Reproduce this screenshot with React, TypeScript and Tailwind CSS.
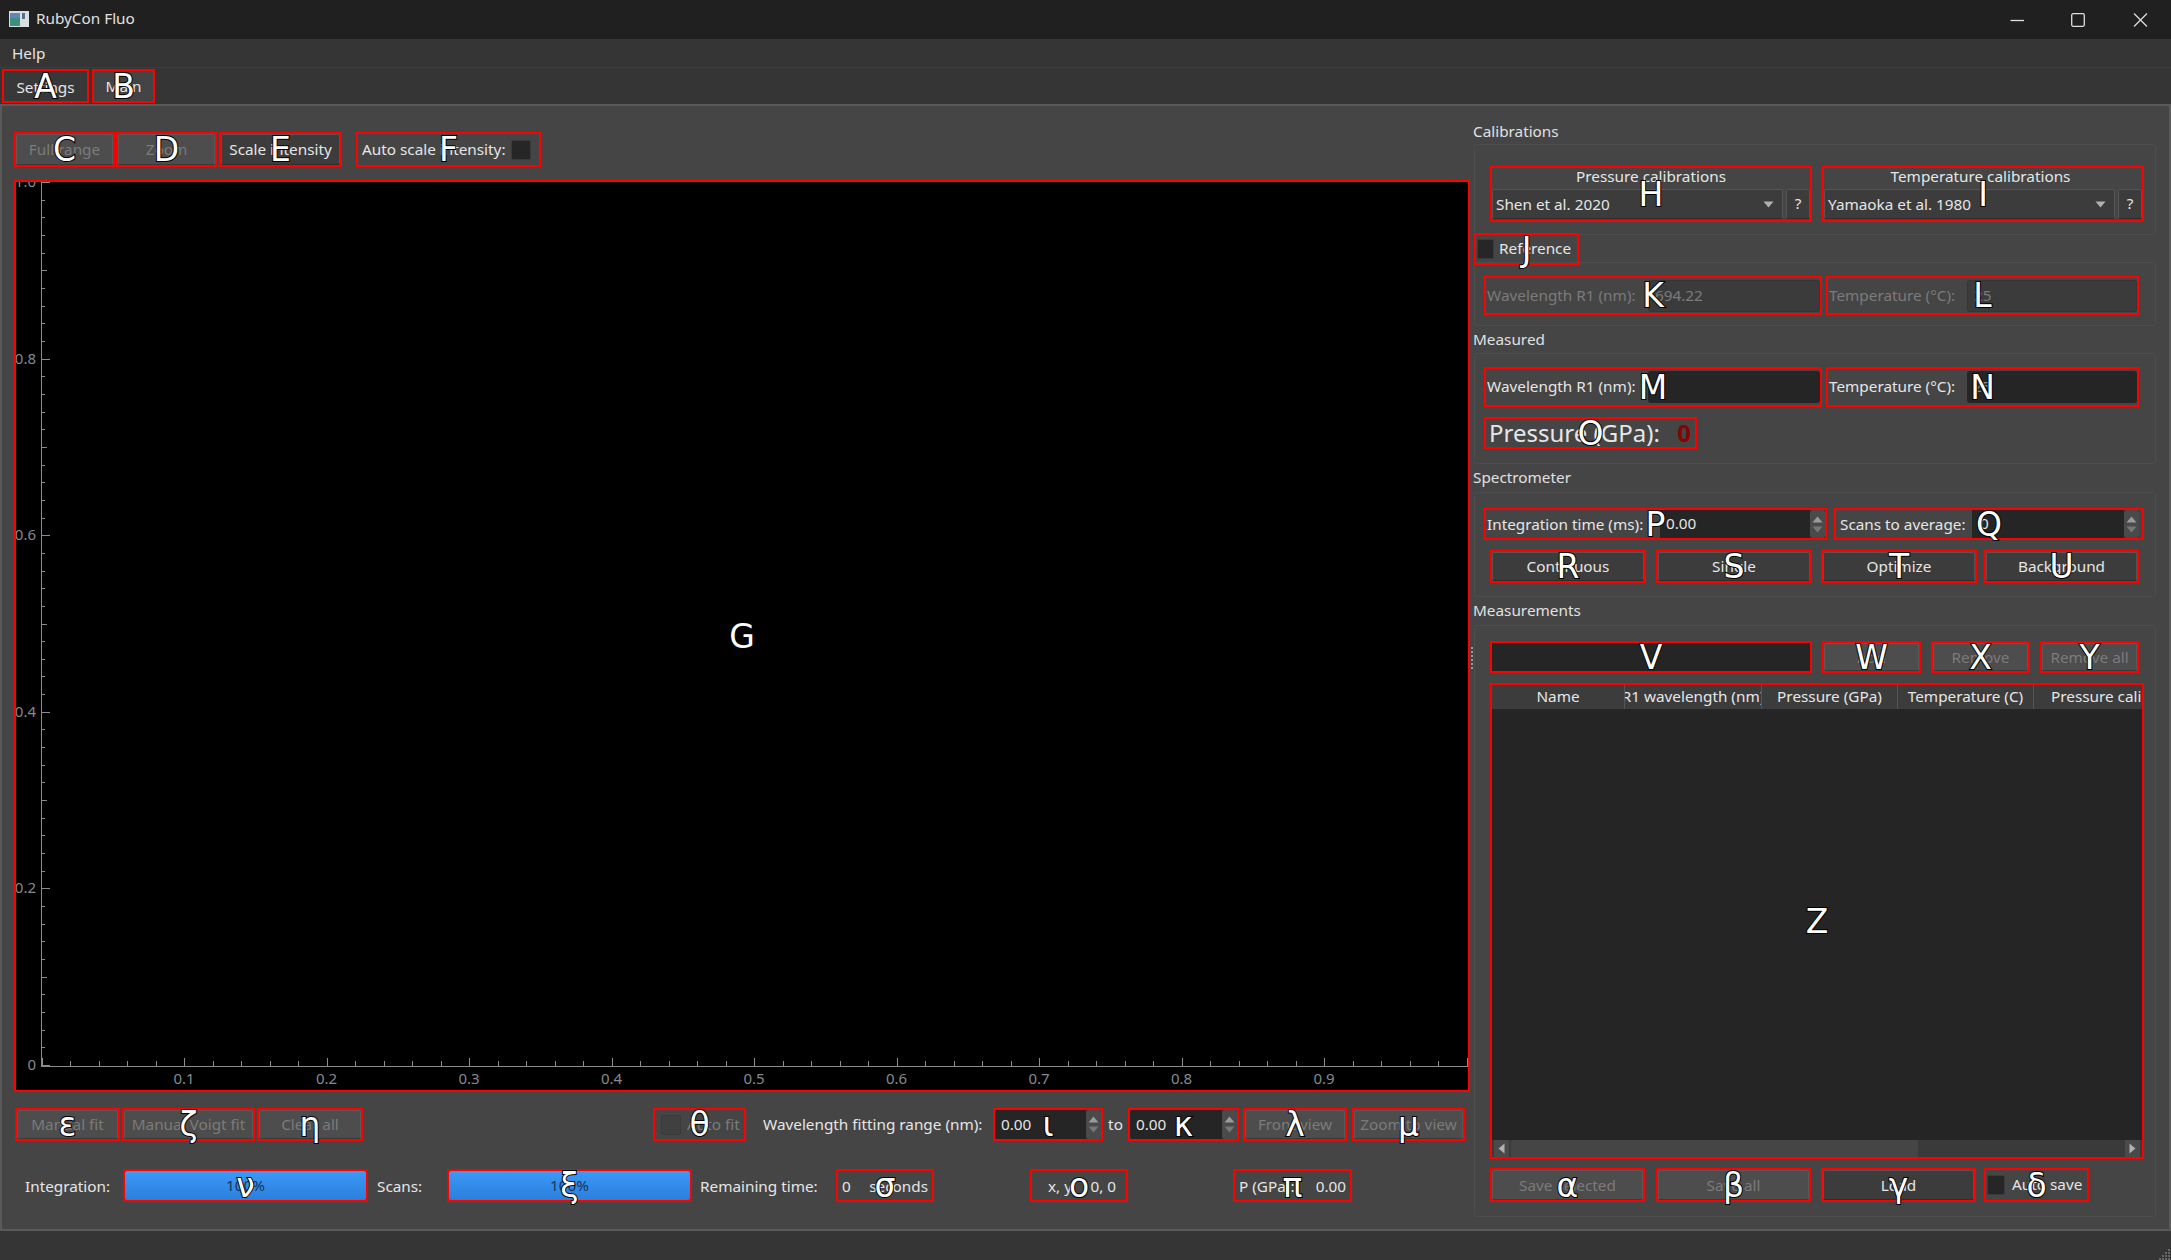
import type { ReactNode } from 'react';

const yTicks = Array.from({ length: 51 }, (_, i) => i);
const xTicks = Array.from({ length: 51 }, (_, i) => i);

function Mark({
  label,
  className,
  children,
}: {
  label: string;
  className: string;
  children?: ReactNode;
}) {
  return (
    <div className={`relative box-border shrink-0 border-2 border-[#ff0000] ${className}`}>
      {children}
      <span className="pointer-events-none absolute inset-0 z-10 flex items-center justify-center font-['DejaVu_Sans',sans-serif] text-[33px] leading-none text-white [-webkit-text-stroke:2px_#000] [paint-order:stroke_fill]">
        {label}
      </span>
    </div>
  );
}

function Btn({ text, disabled }: { text: string; disabled?: boolean }) {
  return (
    <div
      className={
        disabled
          ? 'flex h-full w-full items-center justify-center rounded-[2px] border border-[#5a5a5a] border-b-[#3a3a3a] bg-[#4d4d4d] pt-[1px] text-[#7b7b7b] whitespace-nowrap'
          : 'flex h-full w-full items-center justify-center rounded-[2px] border border-[#555555] border-b-[#2e2e2e] bg-[#3c3c3c] pt-[1px] text-[#e6e6e6] whitespace-nowrap'
      }
    >
      {text}
    </div>
  );
}

function Check({ className }: { className: string }) {
  return <div className={`shrink-0 rounded-[2px] border border-[#3a3a3a] bg-[#262626] ${className}`} />;
}

function Spin() {
  return (
    <div className="flex h-full w-[15px] shrink-0 flex-col items-center justify-center gap-[3px] rounded-[2px] bg-[#4a4a4a]">
      <svg width="11" height="7" viewBox="0 0 11 7">
        <path d="M5.5 0.5 L10.5 6.5 H0.5 Z" fill="#9a9a9a" />
      </svg>
      <svg width="11" height="7" viewBox="0 0 11 7">
        <path d="M0.5 0.5 H10.5 L5.5 6.5 Z" fill="#777777" />
      </svg>
    </div>
  );
}

function Combo({ text }: { text: string }) {
  return (
    <div className="flex h-[30px] w-[291px] shrink-0 items-center justify-between rounded-[2px] border border-[#555555] border-b-[#2e2e2e] bg-[#3c3c3c] pr-[8px] pl-[3px] text-[#e6e6e6]">
      <span className="pt-[1px]">{text}</span>
      <svg width="11" height="7" viewBox="0 0 11 7">
        <path d="M0.5 0.5 H10.5 L5.5 6.5 Z" fill="#b0b0b0" />
      </svg>
    </div>
  );
}

function Help() {
  return (
    <div className="flex h-[30px] w-[24px] shrink-0 items-center justify-center rounded-[2px] border border-[#555555] border-b-[#2e2e2e] bg-[#3c3c3c] text-[#e6e6e6]">
      ?
    </div>
  );
}

function Group({ className, children }: { className: string; children: ReactNode }) {
  return <div className={`box-border rounded-[3px] border border-[#4d4d4d] ${className}`}>{children}</div>;
}

function Heading({ text, className }: { text: string; className: string }) {
  return <div className={`flex h-[20px] items-center text-[#e0e0e0] ${className}`}>{text}</div>;
}

function Field({
  label,
  value,
  labelClass,
  inputClass,
  valueClass,
}: {
  label: string;
  value?: string;
  labelClass: string;
  inputClass: string;
  valueClass: string;
}) {
  return (
    <div className="flex h-full items-center justify-between">
      <span className={`pl-[1px] whitespace-nowrap ${labelClass}`}>{label}</span>
      <div className={`flex h-[32px] items-center rounded-[3px] pl-[6px] ${inputClass} ${valueClass}`}>{value}</div>
    </div>
  );
}

function Progress() {
  return (
    <div className="flex h-full w-full items-center justify-center rounded-[2px] bg-gradient-to-b from-[#3b99f8] to-[#2c7fdc] pt-[1px] text-[#16365c]">
      100%
    </div>
  );
}

function Plot() {
  const y0 = 1065;
  const yStep = 883 / 50;
  const x0 = 41.5;
  const xStep = 142.55 / 5;
  return (
    <svg className="block h-[908px] w-[1452px]" viewBox="16 182 1452 908">
      <rect x="16" y="182" width="1452" height="908" fill="#000" />
      <line x1="41.5" y1="181" x2="41.5" y2="1067" stroke="#8c8c8c" />
      <line x1="41" y1="1066.5" x2="1468" y2="1066.5" stroke="#8c8c8c" />
      {yTicks.map((i) => {
        const len = i % 10 === 0 ? 8 : i % 5 === 0 ? 5 : 3;
        const y = Math.round(y0 - i * yStep) + 0.5;
        return <line key={i} x1="42" y1={y} x2={42 + len} y2={y} stroke="#8c8c8c" />;
      })}
      {xTicks.map((i) => {
        const len = i % 5 === 0 ? 8 : 5;
        const x = Math.round(x0 + i * xStep) + 0.5;
        return <line key={i} x1={x} y1="1066" x2={x} y2={1066 - len} stroke="#8c8c8c" />;
      })}
      <g fill="#858a90" fontSize="15" fontFamily="'Noto Sans', sans-serif">
        {['1.0', '0.8', '0.6', '0.4', '0.2', '0'].map((t, i) => (
          <text key={t} x="36" y={187 + i * 176.6} textAnchor="end">
            {t}
          </text>
        ))}
        {['0.1', '0.2', '0.3', '0.4', '0.5', '0.6', '0.7', '0.8', '0.9'].map((t, i) => (
          <text key={t} x={184 + i * 142.5} y="1084" textAnchor="middle">
            {t}
          </text>
        ))}
      </g>
    </svg>
  );
}

export default function App() {
  return (
    <div className="flex h-[1260px] w-[2171px] flex-col overflow-hidden bg-[#353535] font-['Noto_Sans',sans-serif] text-[15.3px] leading-none text-[#e6e6e6]">
      {/* title bar */}
      <div className="flex h-[39px] shrink-0 items-center justify-between bg-[#202020] pl-[9px]">
        <div className="flex items-center gap-[7px]">
          <svg width="20" height="16" viewBox="0 0 20 16">
            <rect width="20" height="16" fill="#d8dde0" />
            <rect x="1" y="2" width="10" height="13" fill="#3f8f7f" />
            <rect x="1" y="2" width="10" height="5" fill="#5f88b8" />
            <rect x="13" y="2" width="3" height="6" fill="#55708a" />
          </svg>
          <span className="pb-[2px] text-[#e0e0e0]">RubyCon Fluo</span>
        </div>
        <div className="flex h-full items-center">
          <svg width="16" height="16" viewBox="0 0 16 16">
            <path d="M1.5 8.5 H15" stroke="#e0e0e0" strokeWidth="1.3" />
          </svg>
          <svg className="ml-[46px]" width="14" height="16" viewBox="0 0 14 16">
            <rect x="0.7" y="1.7" width="12.6" height="12.6" rx="1.5" fill="none" stroke="#e0e0e0" strokeWidth="1.3" />
          </svg>
          <svg className="mr-[23px] ml-[48px]" width="15" height="16" viewBox="0 0 15 16">
            <path d="M1 1.5 L14 14.5 M14 1.5 L1 14.5" stroke="#e0e0e0" strokeWidth="1.2" />
          </svg>
        </div>
      </div>

      {/* menu */}
      <div className="flex h-[29px] shrink-0 items-center border-b border-[#3d3d3d] pt-[1px] pl-[12px]">Help</div>

      {/* tabs */}
      <div className="flex h-[36px] shrink-0 items-end pl-[2px]">
        <Mark label="A" className="mb-[1px] h-[34px] w-[87px]">
          <div className="flex h-full items-center justify-center bg-[#383838] pt-[4px]">Settings</div>
        </Mark>
        <Mark label="B" className="mb-[1px] ml-[3px] h-[34px] w-[63px]">
          <div className="flex h-full items-center justify-center bg-[#444444] pt-[1px]">Main</div>
        </Mark>
      </div>

      {/* main panel */}
      <div className="box-border flex h-[1127px] shrink-0 border-2 border-[#5a5a5a] bg-[#454545]">
        {/* left side */}
        <div className="flex w-[1468px] shrink-0 flex-col pl-[12px]">
          <div className="mt-[26px] flex h-[35px] items-stretch">
            <Mark label="C" className="w-[101px]">
              <Btn text="Full range" disabled />
            </Mark>
            <Mark label="D" className="ml-[1px] w-[101px]">
              <Btn text="Zoom" disabled />
            </Mark>
            <Mark label="E" className="ml-[2px] w-[123px]">
              <Btn text="Scale intensity" />
            </Mark>
            <Mark label="F" className="ml-[14px] flex w-[185px] items-center justify-between px-[4px]">
              <span className="whitespace-nowrap">Auto scale intensity:</span>
              <Check className="mr-[4px] h-[20px] w-[20px]" />
            </Mark>
          </div>
          <Mark label="G" className="mt-[13px] h-[912px] w-[1456px]">
            <Plot />
          </Mark>

          <div className="mt-[16px] flex h-[33px] items-stretch">
            <Mark label="ε" className="ml-[1px] w-[105px]">
              <Btn text="Manual fit" disabled />
            </Mark>
            <Mark label="ζ" className="ml-[2px] w-[133px]">
              <Btn text="Manual Voigt fit" disabled />
            </Mark>
            <Mark label="η" className="ml-[2px] w-[106px]">
              <Btn text="Clear all" disabled />
            </Mark>
            <Mark label="θ" className="ml-[290px] flex w-[93px] items-center gap-[6px] pl-[6px] text-[#7b7b7b]">
              <Check className="h-[20px] w-[20px] bg-[#404040]" />
              <span className="whitespace-nowrap">Auto fit</span>
            </Mark>
            <span className="ml-[17px] flex w-[230px] items-center whitespace-nowrap">
              Wavelength fitting range (nm):
            </span>
            <Mark label="ι" className="w-[110px]">
              <div className="flex h-full items-center justify-between rounded-[2px] bg-[#252525] pl-[6px]">
                0.00
                <Spin />
              </div>
            </Mark>
            <span className="flex w-[25px] items-center justify-center">to</span>
            <Mark label="κ" className="w-[111px]">
              <div className="flex h-full items-center justify-between rounded-[2px] bg-[#252525] pl-[6px]">
                0.00
                <Spin />
              </div>
            </Mark>
            <Mark label="λ" className="ml-[4px] w-[104px]">
              <Btn text="Front view" disabled />
            </Mark>
            <Mark label="μ" className="ml-[5px] w-[113px]">
              <Btn text="Zoom to view" disabled />
            </Mark>
          </div>

          <div className="mt-[28px] flex h-[33px] items-stretch">
            <span className="ml-[11px] flex w-[96px] items-center pt-[2px] whitespace-nowrap">Integration:</span>
            <Mark label="ν" className="ml-[2px] w-[245px]">
              <Progress />
            </Mark>
            <span className="ml-[9px] flex w-[70px] items-center pt-[2px]">Scans:</span>
            <Mark label="ξ" className="w-[245px]">
              <Progress />
            </Mark>
            <span className="ml-[8px] flex w-[136px] items-center pt-[2px] whitespace-nowrap">Remaining time:</span>
            <Mark label="σ" className="flex w-[98px] items-center justify-between px-[4px] pt-[2px]">
              <span>0</span>
              <span>seconds</span>
            </Mark>
            <Mark label="ο" className="ml-[96px] flex w-[98px] items-center justify-between pt-[2px] pr-[10px] pl-[16px]">
              <span>x, y:</span>
              <span>0, 0</span>
            </Mark>
            <Mark label="π" className="ml-[105px] flex w-[119px] items-center justify-between px-[4px] pt-[2px]">
              <span>P (GPa):</span>
              <span>0.00</span>
            </Mark>
          </div>
        </div>

        {/* splitter */}
        <div className="flex w-[3px] shrink-0 flex-col items-center justify-center gap-[2px] pb-[20px]">
          <div className="h-[2px] w-[2px] bg-[#999999]" />
          <div className="h-[2px] w-[2px] bg-[#999999]" />
          <div className="h-[2px] w-[2px] bg-[#999999]" />
          <div className="h-[2px] w-[2px] bg-[#999999]" />
          <div className="h-[2px] w-[2px] bg-[#999999]" />
          <div className="h-[2px] w-[2px] bg-[#999999]" />
        </div>

        {/* right side */}
        <div className="flex flex-1 flex-col">
          <Heading text="Calibrations" className="mt-[16px]" />
          <Group className="mt-[2px] ml-[1px] h-[91px] w-[682px] pt-[21px] pl-[15px]">
            <div className="flex gap-[10px]">
              <Mark label="H" className="h-[56px] w-[322px]">
                <div className="flex h-[20px] items-center justify-center pb-[2px]">Pressure calibrations</div>
                <div className="mt-[1px] flex gap-[3px]">
                  <Combo text="Shen et al. 2020" />
                  <Help />
                </div>
              </Mark>
              <Mark label="I" className="h-[56px] w-[322px]">
                <div className="flex h-[20px] items-center justify-center pr-[5px] pb-[2px]">Temperature calibrations</div>
                <div className="mt-[1px] flex gap-[3px]">
                  <Combo text="Yamaoka et al. 1980" />
                  <Help />
                </div>
              </Mark>
            </div>
          </Group>
          <Mark label="J" className="-mt-[2px] ml-[1px] flex h-[32px] w-[105px] items-center gap-[5px] pl-[1px]">
            <Check className="h-[20px] w-[17px]" />
            <span>Reference</span>
          </Mark>
          <Group className="-mt-[3px] ml-[1px] h-[64px] w-[682px] pt-[13px] pl-[9px]">
            <div className="flex gap-[4px]">
              <Mark label="K" className="h-[39px] w-[338px]">
                <Field
                  label="Wavelength R1 (nm):"
                  value="694.22"
                  labelClass="text-[#7b7b7b]"
                  inputClass="w-[172px] border border-[#353535] bg-[#3b3b3b]"
                  valueClass="text-[#7b7b7b]"
                />
              </Mark>
              <Mark label="L" className="h-[39px] w-[313px]">
                <Field
                  label="Temperature (°C):"
                  value="25"
                  labelClass="text-[#7b7b7b]"
                  inputClass="w-[170px] border border-[#353535] bg-[#3b3b3b]"
                  valueClass="text-[#7b7b7b]"
                />
              </Mark>
            </div>
          </Group>

          <Heading text="Measured" className="mt-[4px]" />
          <Group className="mt-[3px] ml-[1px] h-[111px] w-[682px] pt-[13px] pl-[9px]">
            <div className="flex gap-[4px]">
              <Mark label="M" className="h-[40px] w-[338px]">
                <Field label="Wavelength R1 (nm):" labelClass="" inputClass="w-[172px] bg-[#252525]" valueClass="" />
              </Mark>
              <Mark label="N" className="h-[40px] w-[313px]">
                <Field
                  label="Temperature (°C):"
                  value="25"
                  labelClass=""
                  inputClass="w-[170px] bg-[#252525]"
                  valueClass="text-[#8a8a8a]"
                />
              </Mark>
            </div>
            <Mark label="O" className="mt-[10px] flex h-[32px] w-[213px] items-center justify-between pr-[4px] pl-[3px] text-[24px]">
              <span className="whitespace-nowrap">Pressure (GPa):</span>
              <span className="font-bold text-[#8b0000]">0</span>
            </Mark>
          </Group>

          <Heading text="Spectrometer" className="mt-[4px]" />
          <Group className="mt-[4px] ml-[1px] h-[105px] w-[682px] pt-[15px] pl-[9px]">
            <div className="flex gap-[7px]">
              <Mark label="P" className="flex h-[32px] w-[343px] items-center justify-between">
                <span className="pt-[1px] pl-[1px] whitespace-nowrap">Integration time (ms):</span>
                <div className="flex h-full w-[165px] items-center justify-between bg-[#252525] pl-[6px]">
                  0.00
                  <Spin />
                </div>
              </Mark>
              <Mark label="Q" className="flex h-[32px] w-[310px] items-center justify-between">
                <span className="pt-[1px] pl-[4px] whitespace-nowrap">Scans to average:</span>
                <div className="mr-[3px] flex h-full w-[167px] items-center justify-between bg-[#252525] pl-[8px]">
                  0
                  <Spin />
                </div>
              </Mark>
            </div>
            <div className="mt-[10px] ml-[6px] flex h-[33px] items-stretch">
              <Mark label="R" className="w-[156px]">
                <Btn text="Continuous" />
              </Mark>
              <Mark label="S" className="ml-[10px] w-[156px]">
                <Btn text="Single" />
              </Mark>
              <Mark label="T" className="ml-[9px] w-[156px]">
                <Btn text="Optimize" />
              </Mark>
              <Mark label="U" className="ml-[7px] w-[155px]">
                <Btn text="Background" />
              </Mark>
            </div>
          </Group>

          <Heading text="Measurements" className="mt-[4px]" />
          <Group className="mt-[4px] ml-[1px] h-[592px] w-[682px] pt-[15px] pl-[15px]">
            <div className="flex h-[32px] gap-[10px]">
              <Mark label="V" className="w-[322px] bg-[#252525]" />
              <Mark label="W" className="w-[99px]">
                <Btn text="Add" disabled />
              </Mark>
              <Mark label="X" className="w-[99px]">
                <Btn text="Remove" disabled />
              </Mark>
              <Mark label="Y" className="w-[99px]">
                <Btn text="Remove all" disabled />
              </Mark>
            </div>
            <Mark label="Z" className="mt-[10px] flex h-[476px] w-[654px] flex-col bg-[#252525]">
              <div className="flex h-[24px] shrink-0 overflow-hidden bg-[#3c3c3c]">
                <div className="flex w-[133px] shrink-0 items-center justify-center overflow-hidden border-r border-[#555555] whitespace-nowrap">
                  Name
                </div>
                <div className="flex w-[137px] shrink-0 items-center justify-center overflow-hidden border-r border-[#555555] whitespace-nowrap">
                  R1 wavelength (nm)
                </div>
                <div className="flex w-[136px] shrink-0 items-center justify-center overflow-hidden border-r border-[#555555] whitespace-nowrap">
                  Pressure (GPa)
                </div>
                <div className="flex w-[136px] shrink-0 items-center justify-center overflow-hidden border-r border-[#555555] whitespace-nowrap">
                  Temperature (C)
                </div>
                <div className="flex w-[200px] shrink-0 items-center overflow-hidden pl-[17px] whitespace-nowrap">
                  Pressure calibration
                </div>
              </div>
              <div className="flex-1" />
              <div className="flex h-[17px] shrink-0 items-stretch gap-[2px] bg-[#3a3a3a] px-[2px]">
                <div className="flex w-[15px] items-center justify-center rounded-[1px] bg-[#4a4a4a]">
                  <svg width="7" height="11" viewBox="0 0 7 11">
                    <path d="M6.5 0.5 V10.5 L0.5 5.5 Z" fill="#b0b0b0" />
                  </svg>
                </div>
                <div className="w-[407px] rounded-[1px] bg-[#454545]" />
                <div className="flex-1" />
                <div className="flex w-[15px] items-center justify-center rounded-[1px] bg-[#4a4a4a]">
                  <svg width="7" height="11" viewBox="0 0 7 11">
                    <path d="M0.5 0.5 V10.5 L6.5 5.5 Z" fill="#b0b0b0" />
                  </svg>
                </div>
              </div>
            </Mark>
            <div className="mt-[9px] flex h-[34px] items-stretch">
              <Mark label="α" className="w-[155px]">
                <Btn text="Save selected" disabled />
              </Mark>
              <Mark label="β" className="ml-[11px] w-[155px]">
                <Btn text="Save all" disabled />
              </Mark>
              <Mark label="γ" className="ml-[10px] w-[155px]">
                <Btn text="Load" />
              </Mark>
              <Mark label="δ" className="ml-[8px] flex w-[105px] items-center gap-[7px] pl-[1px]">
                <Check className="h-[20px] w-[18px]" />
                <span className="whitespace-nowrap">Auto save</span>
              </Mark>
            </div>
          </Group>
        </div>
      </div>

      {/* status bar */}
      <div className="flex flex-1 items-end justify-end">
        <svg width="12" height="12" viewBox="0 0 12 12" fill="#666666">
          <rect x="9" y="1" width="2" height="2" />
          <rect x="6" y="4" width="2" height="2" />
          <rect x="9" y="4" width="2" height="2" />
          <rect x="3" y="7" width="2" height="2" />
          <rect x="6" y="7" width="2" height="2" />
          <rect x="9" y="7" width="2" height="2" />
          <rect x="0" y="10" width="2" height="2" />
          <rect x="3" y="10" width="2" height="2" />
          <rect x="6" y="10" width="2" height="2" />
          <rect x="9" y="10" width="2" height="2" />
        </svg>
      </div>
    </div>
  );
}
